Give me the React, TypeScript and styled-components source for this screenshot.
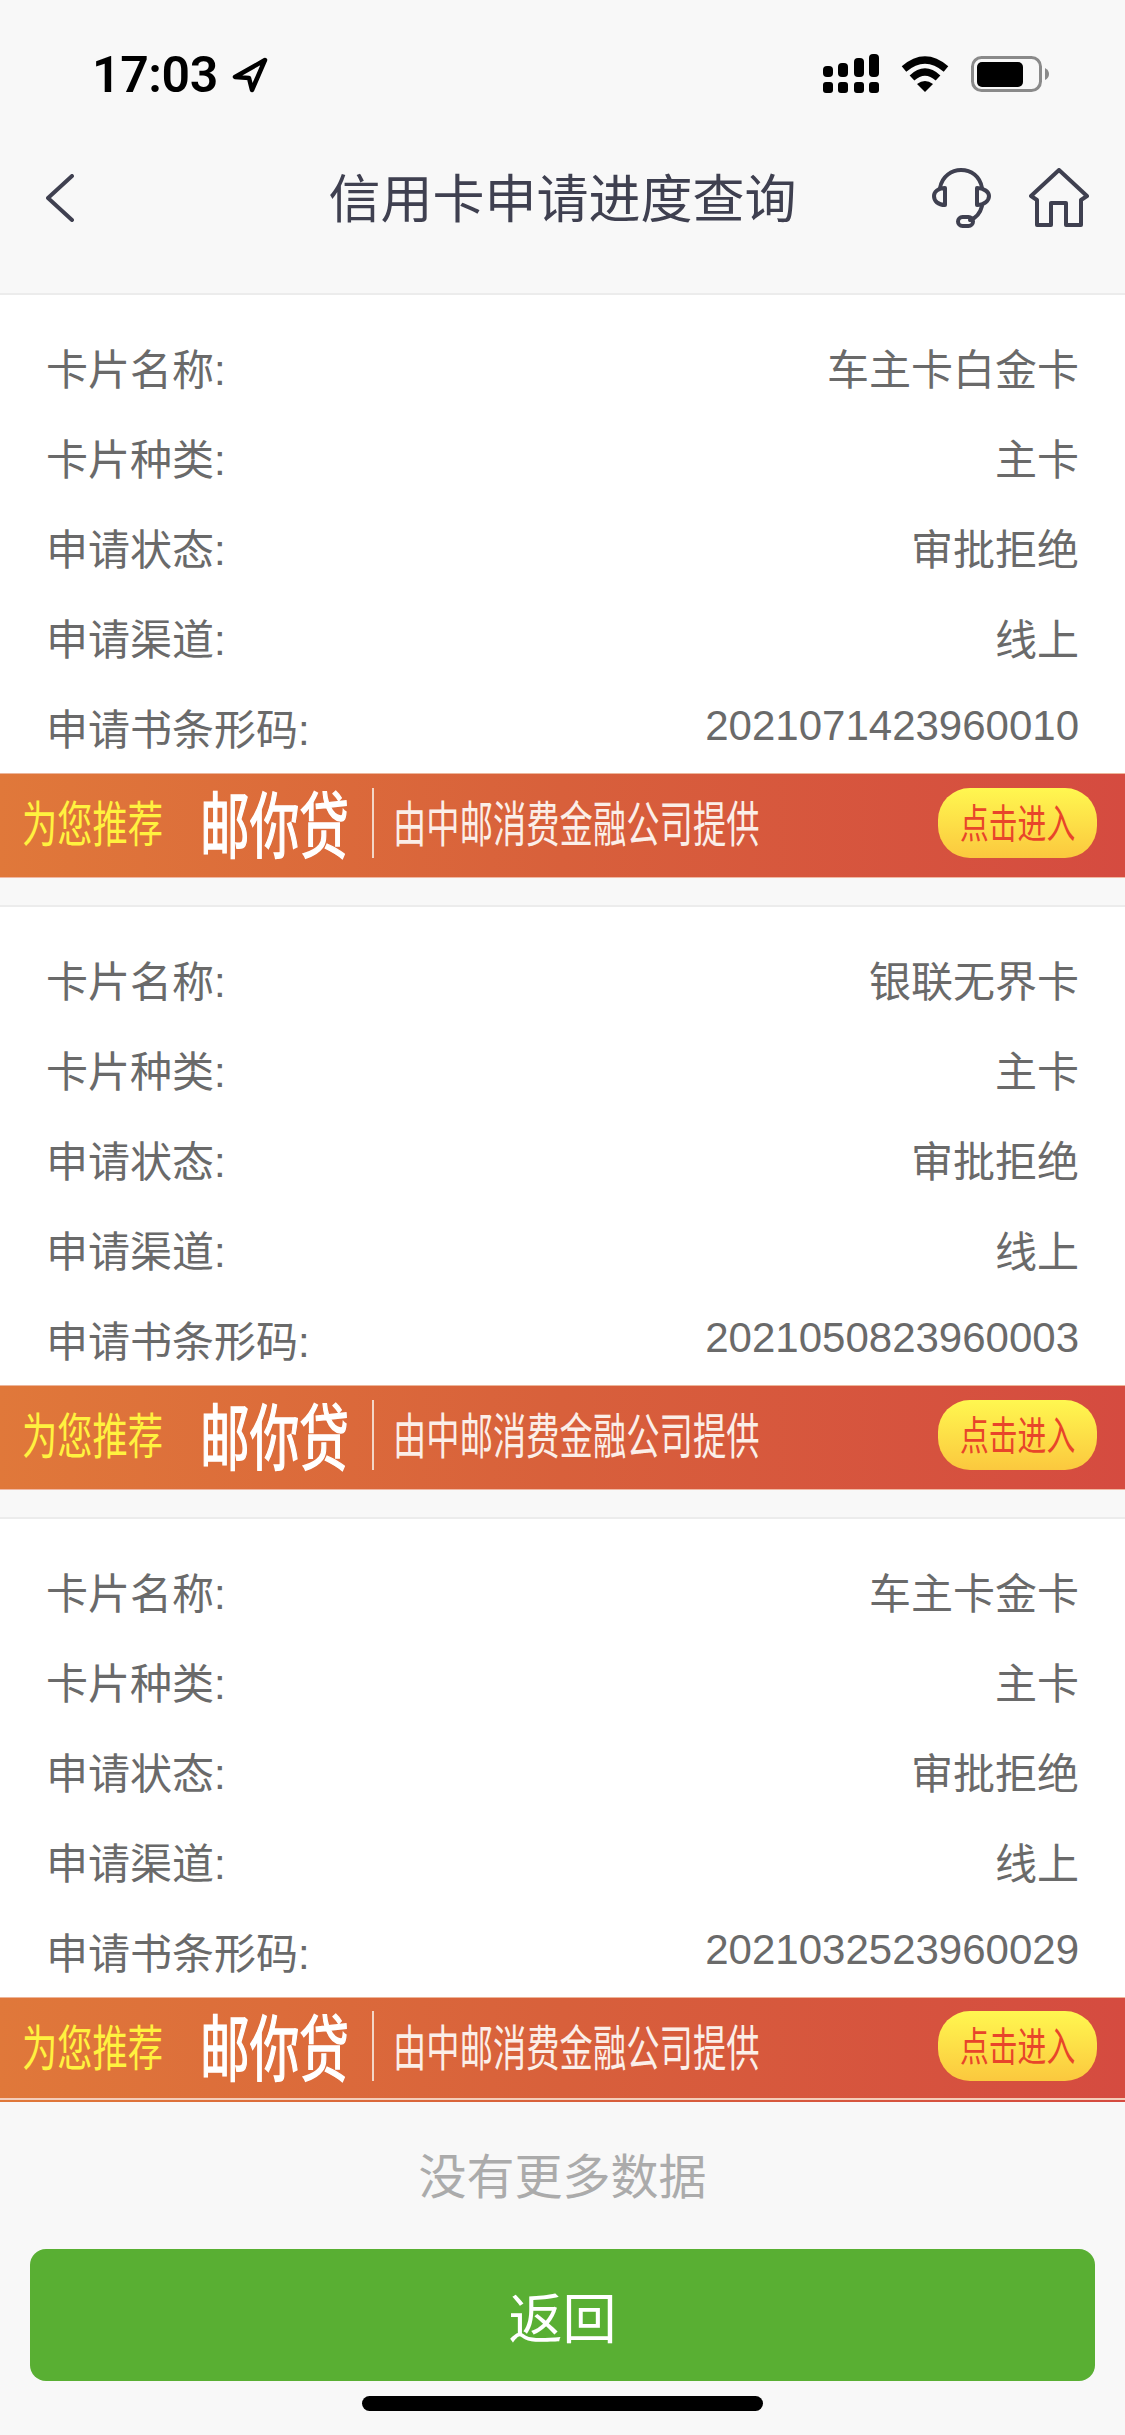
import styled, { createGlobalStyle } from 'styled-components'

const GlobalStyle = createGlobalStyle`
  html, body {
    margin: 0;
    padding: 0;
    background: #f8f8f8;
  }
  * {
    box-sizing: border-box;
  }
`

const cjk = `"Liberation Sans", "Noto Sans CJK SC", sans-serif`

const Page = styled.div`
  width: 1125px;
  min-height: 2435px;
  display: flex;
  flex-direction: column;
  background: #f8f8f8;
  font-family: ${cjk};
`
const Header = styled.header`
  height: 295px;
  flex-shrink: 0;
  border-bottom: 2px solid #ececec;
`
const StatusBar = styled.div`
  height: 132px;
  padding: 46px 76px 0 92px;
  display: flex;
  justify-content: space-between;
  align-items: flex-start;
`
const Clock = styled.div`
  display: flex;
  align-items: center;
  gap: 14px;
  height: 58px;
  font-family: Roboto, sans-serif;
  font-weight: 600;
  font-size: 50px;
  letter-spacing: -0.4px;
  color: #000;
`
const StatusIcons = styled.div`
  display: flex;
  align-items: center;
  gap: 22px;
  margin-top: 8px;
`
const NavBar = styled.div`
  height: 132px;
  padding: 0 36px;
  display: grid;
  grid-template-columns: 1fr auto 1fr;
  align-items: center;
`
const BackLink = styled.div`
  padding-left: 10px;
  display: flex;
`
const Title = styled.h1`
  margin: 0 0 6px;
  font-size: 52px;
  font-weight: 400;
  color: #3f4050;
`
const NavIcons = styled.div`
  display: flex;
  justify-content: flex-end;
  align-items: center;
  gap: 37px;
`
const Card = styled.section<{ $first?: boolean }>`
  flex-shrink: 0;
  margin-top: ${(props) => (props.$first ? '0' : '27px')};
  border-top: ${(props) => (props.$first ? 'none' : '2px solid #ececec')};
  background: #fff;
`
const Rows = styled.div`
  padding: 26px 46px 0;
  height: 478px;
`
const Row = styled.div`
  height: 90px;
  display: flex;
  justify-content: space-between;
  align-items: center;
  font-size: 42px;
  color: #6a6a6a;
`
const Banner = styled.div<{ $last?: boolean }>`
  height: 105px;
  display: flex;
  align-items: center;
  padding: 0 28px 6px 22px;
  background: linear-gradient(90deg, #e0783a 0%, #d8603b 50%, #d54b40 100%);
  border-top: 1px solid #edb59a;
  border-bottom: ${(props) => (props.$last ? '2px solid transparent' : '1px solid #f0b8a4')};
  box-shadow: ${(props) => (props.$last ? 'inset 0 -2px 0 #f4cdb9' : 'none')};
`
// the banner lettering is a squeezed picture in the original, so its text is narrowed
const Squeezed = styled.span<{ $width: number; $size: number; $scale: number; $color: string; $stroke?: boolean }>`
  display: block;
  flex-shrink: 0;
  width: ${(props) => props.$width}px;
  margin-bottom: 4px;
  font-family: "Noto Sans CJK SC", sans-serif;
  font-size: ${(props) => props.$size}px;
  line-height: 1;
  color: ${(props) => props.$color};
  -webkit-text-stroke: ${(props) => (props.$stroke ? '1.5px' : '0')} ${(props) => props.$color};
  white-space: nowrap;
  transform: scaleX(${(props) => props.$scale});
  transform-origin: left center;
`
const BannerDivider = styled.i`
  display: block;
  width: 2px;
  height: 70px;
  margin: 0 19px 0 20px;
  background: #f3d6c6;
`
const EnterButton = styled.div`
  width: 159px;
  height: 70px;
  margin-left: auto;
  padding-left: 22px;
  display: flex;
  align-items: center;
  border-radius: 32px;
  background: linear-gradient(180deg, #fff750 0%, #fbc83e 100%);
`
const Footer = styled.footer`
  display: flex;
  flex-direction: column;
  align-items: center;
`
const NoMore = styled.div`
  height: 147px;
  padding-bottom: 6px;
  display: flex;
  align-items: center;
  font-size: 48px;
  color: #ababab;
`
const BackButton = styled.button`
  width: 1065px;
  height: 132px;
  border: none;
  border-radius: 16px;
  background: #59af33;
  color: #fff;
  font-family: ${cjk};
  font-size: 54px;
`
const HomeBar = styled.div`
  width: 401px;
  height: 15px;
  margin-top: 15px;
  border-radius: 8px;
  background: #000;
`

const records = [
  { name: '车主卡白金卡', code: '2021071423960010' },
  { name: '银联无界卡', code: '2021050823960003' },
  { name: '车主卡金卡', code: '2021032523960029' }
]

function Signal() {
  return (
    <svg width='56' height='39' viewBox='0 0 56 39'>
      <rect x='0' y='12' width='10' height='11' rx='4' />
      <rect x='15' y='9' width='10' height='14' rx='4' />
      <rect x='31' y='4' width='10' height='19' rx='4' />
      <rect x='46' y='0' width='10' height='23' rx='4' />
      <rect x='0' y='28' width='10' height='11' rx='3' />
      <rect x='15' y='28' width='10' height='11' rx='3' />
      <rect x='31' y='28' width='10' height='11' rx='3' />
      <rect x='46' y='28' width='10' height='11' rx='3' />
    </svg>
  )
}

function Wifi() {
  return (
    <svg width='48' height='36' viewBox='0 0 48 36' fill='none' stroke='#000'>
      <path d='M3 13 Q24 -5 45 13' strokeWidth='7' />
      <path d='M11 22 Q24 10 37 22' strokeWidth='7' />
      <path d='M16 28 Q24 22 32 28 L24 36 Z' fill='#000' stroke='none' />
    </svg>
  )
}

function Battery() {
  return (
    <svg width='78' height='36' viewBox='0 0 78 36'>
      <rect x='1.5' y='1.5' width='68' height='33' rx='9' fill='none' stroke='#8a8a8a' strokeWidth='3' />
      <rect x='6' y='6' width='46' height='25' rx='5' fill='#000' />
      <path d='M74 12 Q78 14 78 18 Q78 22 74 24 Z' fill='#8a8a8a' />
    </svg>
  )
}

function LocationArrow() {
  return (
    <svg width='36' height='36' viewBox='0 0 36 36' fill='none' stroke='#000' strokeWidth='4.5' strokeLinejoin='round'>
      <path d='M33 3 L3 20 L17 21 L20 33 Z' />
    </svg>
  )
}

function BackChevron() {
  return (
    <svg width='30' height='48' viewBox='0 0 30 48' fill='none' stroke='#3f4050' strokeWidth='4' strokeLinecap='round' strokeLinejoin='round'>
      <path d='M26 2 L2 24 L26 46' />
    </svg>
  )
}

function Headset() {
  return (
    <svg width='60' height='60' viewBox='0 0 60 60' fill='none' stroke='#3f4050' strokeWidth='4' strokeLinecap='round' strokeLinejoin='round'>
      <path d='M8 20 C10 8 20 2 29 2 C39 2 48 8 50 20' />
      <path d='M13 20 L13 37 C6 37 2 33 2 28 C2 24 6 20 13 20 Z' />
      <path d='M45 20 L45 37 C52 37 57 33 57 28 C57 24 52 20 45 20 Z' />
      <path d='M50 38 C48 46 44 50 38 52' />
      <rect x='26' y='49' width='15' height='9' rx='4.5' />
    </svg>
  )
}

function HomeIcon() {
  return (
    <svg width='60' height='60' viewBox='0 0 60 60' fill='none' stroke='#3f4050' strokeWidth='4' strokeLinejoin='round' strokeLinecap='round'>
      <path d='M30 2 L2 28 L8 32 L8 57 L22 57 L22 35 L37 35 L37 57 L52 57 L52 32 L58 28 Z' />
    </svg>
  )
}

function LoanBanner({ last }: { last?: boolean }) {
  return (
    <Banner $last={last}>
      <Squeezed $width={178} $size={49} $scale={0.72} $color='#fff23f'>为您推荐</Squeezed>
      <Squeezed $width={152} $size={72} $scale={0.69} $color='#fff' $stroke>邮你贷</Squeezed>
      <BannerDivider />
      <Squeezed $width={374} $size={49} $scale={0.68} $color='#fbeee8'>由中邮消费金融公司提供</Squeezed>
      <EnterButton>
        <Squeezed $width={116} $size={40} $scale={0.72} $color='#e8452a'>点击进入</Squeezed>
      </EnterButton>
    </Banner>
  )
}

export default function App() {
  return (
    <Page>
      <GlobalStyle />
      <Header>
        <StatusBar>
          <Clock>
            17:03
            <LocationArrow />
          </Clock>
          <StatusIcons>
            <Signal />
            <Wifi />
            <Battery />
          </StatusIcons>
        </StatusBar>
        <NavBar>
          <BackLink>
            <BackChevron />
          </BackLink>
          <Title>信用卡申请进度查询</Title>
          <NavIcons>
            <Headset />
            <HomeIcon />
          </NavIcons>
        </NavBar>
      </Header>
      {records.map((record, index) => (
        <Card key={record.code} $first={index === 0}>
          <Rows>
            <Row><span>卡片名称:</span><span>{record.name}</span></Row>
            <Row><span>卡片种类:</span><span>主卡</span></Row>
            <Row><span>申请状态:</span><span>审批拒绝</span></Row>
            <Row><span>申请渠道:</span><span>线上</span></Row>
            <Row><span>申请书条形码:</span><span>{record.code}</span></Row>
          </Rows>
          <LoanBanner last={index === records.length - 1} />
        </Card>
      ))}
      <Footer>
        <NoMore>没有更多数据</NoMore>
        <BackButton>返回</BackButton>
        <HomeBar />
      </Footer>
    </Page>
  )
}
